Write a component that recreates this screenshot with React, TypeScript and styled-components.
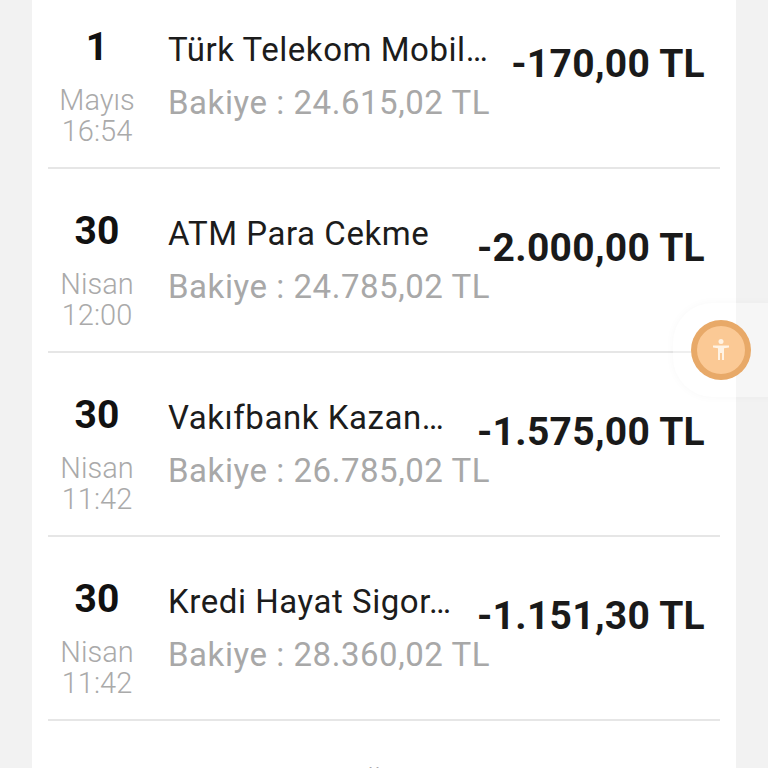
import { createGlobalStyle, styled } from "styled-components";

const GlobalStyle = createGlobalStyle`
    html, body {
        margin: 0;
        padding: 0;
        background-color: #f2f2f2;
    }
    body {
        font-family: Roboto, "Liberation Sans", sans-serif;
    }
`;

const Page = styled.div`
    position: relative;
    width: 768px;
    height: 768px;
    overflow: hidden;
`;

const Card = styled.div`
    margin: -15px 32px 0;
    height: 800px;
    padding: 0 16px;
    background-color: #fff;
`;

const Row = styled.div`
    display: flex;
    box-sizing: border-box;
    height: 184px;
    border-bottom: 2px solid #e6e6e6;
    &:last-child {
        border-bottom: none;
    }
`;

const DateColumn = styled.div`
    display: flex;
    flex-direction: column;
    align-items: center;
    flex: none;
    width: 98px;
    padding-top: 39px;
`;

const Day = styled.div`
    font-size: 39px;
    line-height: 46px;
    font-weight: 700;
    color: #111;
`;

const Month = styled.div`
    margin-top: 15px;
    font-size: 29px;
    line-height: 31px;
    font-weight: 300;
    color: #aaa;
`;

const Time = styled.div`
    font-size: 29px;
    line-height: 31px;
    font-weight: 300;
    color: #aaa;
`;

const Info = styled.div`
    flex: 1 1 0;
    min-width: 0;
    margin-left: 22px;
    padding-top: 45px;
`;

const Title = styled.div`
    font-size: 33px;
    line-height: 40px;
    letter-spacing: 0.55px;
    color: #1c1c1c;
    white-space: nowrap;
`;

const Balance = styled.div`
    margin-top: 13px;
    font-size: 33px;
    line-height: 40px;
    letter-spacing: 0.55px;
    color: #a8a8a8;
    white-space: nowrap;
`;

const Amount = styled.div`
    flex: none;
    padding: 56px 15px 0 0;
    font-size: 39px;
    line-height: 46px;
    font-weight: 700;
    letter-spacing: 0.3px;
    color: #1a1a1a;
    white-space: nowrap;
`;

const FloatTab = styled.div`
    position: absolute;
    top: 303px;
    right: -40px;
    display: flex;
    align-items: center;
    box-sizing: border-box;
    width: 135px;
    height: 94px;
    padding-left: 18px;
    border-radius: 40px;
    background-color: rgba(255, 255, 255, 0.35);
    box-shadow: 0 0 10px rgba(0, 0, 0, 0.03);
`;

const AccessButton = styled.div`
    display: flex;
    align-items: center;
    justify-content: center;
    box-sizing: border-box;
    width: 60px;
    height: 60px;
    border: 6px solid rgba(229, 165, 100, 0.9);
    border-radius: 50%;
    background-color: rgba(251, 198, 143, 0.95);
`;

const rows = [
    { day: "1", month: "Mayıs", time: "16:54", title: "Türk Telekom Mobil…", balance: "24.615,02", amount: "-170,00" },
    { day: "30", month: "Nisan", time: "12:00", title: "ATM Para Cekme", balance: "24.785,02", amount: "-2.000,00" },
    { day: "30", month: "Nisan", time: "11:42", title: "Vakıfbank Kazan…", balance: "26.785,02", amount: "-1.575,00" },
    { day: "30", month: "Nisan", time: "11:42", title: "Kredi Hayat Sigor…", balance: "28.360,02", amount: "-1.151,30" },
    { day: "30", month: "Nisan", time: "11:42", title: "Aracı Kurum Üye", balance: "29.511,32", amount: "-12,50" },
];

export default function App() {
    return <Page>
        <GlobalStyle />
        <Card>
            {rows.map((row, index) => <Row key={index}>
                <DateColumn>
                    <Day>{row.day}</Day>
                    <Month>{row.month}</Month>
                    <Time>{row.time}</Time>
                </DateColumn>
                <Info>
                    <Title>{row.title}</Title>
                    <Balance>Bakiye : {row.balance} TL</Balance>
                </Info>
                <Amount>{row.amount} TL</Amount>
            </Row>)}
        </Card>
        <FloatTab>
            <AccessButton>
                <svg width="20" height="24" viewBox="0 0 20 24" fill="#fff3e4">
                    <circle cx="10" cy="3.5" r="2.5" />
                    <path d="M2 7.5h16v2l-5 .8V22h-2v-7H9v7H7V10.3l-5-.8z" />
                </svg>
            </AccessButton>
        </FloatTab>
    </Page>;
}
